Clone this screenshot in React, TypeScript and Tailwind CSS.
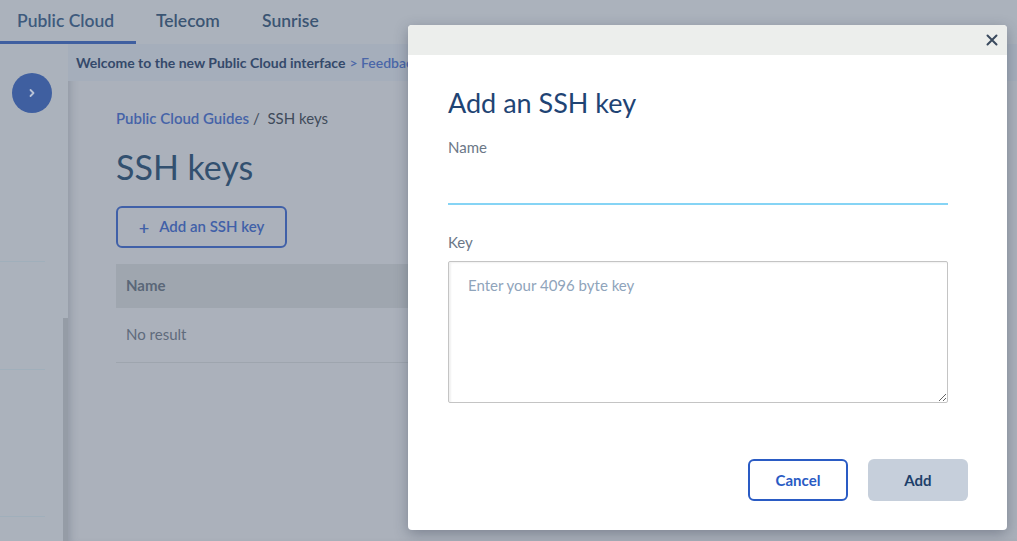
import React from "react";

const FONT = { fontFamily: "Lato, 'Noto Sans', sans-serif" };

function TopNav() {
  return (
    <div className="flex h-[44px] bg-[#abb2bc] text-[17.5px] font-semibold">
      <div className="flex w-[136px] items-center border-b-[3px] border-[#3f5fa0] pl-[17px] pt-[1px] text-[#3e5a7d]">
        Public Cloud
      </div>
      <div className="flex w-[106px] items-center pl-[20px] pb-[2px] text-[#3b5573]">Telecom</div>
      <div className="flex items-center pl-[20px] pb-[2px] text-[#3b5573]">Sunrise</div>
    </div>
  );
}

function Sidebar() {
  return (
    <div className="relative w-[68px] shrink-0 bg-[#abb2bc]">
      <div className="flex flex-col">
        <div className="mt-[29px] ml-[12px] flex h-[40px] w-[40px] items-center justify-center rounded-full bg-[#3f5fa0]">
          <svg width="10" height="10" viewBox="0 0 10 10">
            <path d="M3.5 2 L6.5 5 L3.5 8" fill="none" stroke="#b9c3d6" strokeWidth="1.8" strokeLinecap="round" strokeLinejoin="round" />
          </svg>
        </div>
        <div className="mt-[148px] h-px w-[45px] bg-[#a0afbb]" />
        <div className="mt-[107px] h-px w-[45px] bg-[#a0afbb]" />
        <div className="mt-[146px] h-px w-[45px] bg-[#a0afbb]" />
      </div>
      <div className="absolute right-0 top-[274px] bottom-0 w-[5px] bg-[#959ca6]" />
    </div>
  );
}

function Main() {
  return (
    <div className="flex-1 bg-[#abb1bb] shadow-[inset_8px_0_8px_-6px_rgba(60,70,90,0.25)]">
      <div className="flex h-[37px] items-center bg-[#a5aebb] pl-[8px] text-[14px]">
        <span className="font-bold text-[#34496a]">Welcome to the new Public Cloud interface</span>
        <span className="ml-[4px] font-semibold text-[#4a66a8]">&gt; Feedback</span>
      </div>
      <div className="pl-[48px] pr-[40px]">
        <div className="mt-[26px] flex items-center text-[15px]">
          <span className="font-semibold text-[#4563a8]">Public Cloud Guides</span>
          <span className="ml-[4px] text-[#3f4b5a]">/&nbsp; SSH keys</span>
        </div>
        <h1 className="mt-[15px] text-[34px] leading-[44px] font-normal text-[#32506f]">SSH keys</h1>
        <button className="mt-[17px] flex h-[42px] w-[171px] items-center justify-center gap-[10px] rounded-[6px] border-2 border-[#4060a8] text-[15px] font-semibold text-[#4060a8]">
          <span className="text-[18px] leading-none">+</span>
          <span>Add an SSH key</span>
        </button>
        <div className="mt-[16px]">
          <div className="flex h-[44px] items-center bg-[#9fa6af] pl-[10px] text-[15px] font-bold text-[#5a6778]">Name</div>
          <div className="flex h-[55px] items-center border-b border-[#9ea5ae] pl-[10px] text-[15px] text-[#5f6b7b]">No result</div>
        </div>
      </div>
    </div>
  );
}

function Modal() {
  return (
    <div className="absolute left-[408px] top-[25px] flex h-[505px] w-[599px] flex-col overflow-hidden rounded-[4px] bg-white shadow-[0_4px_14px_rgba(40,50,70,0.35)]">
      <div className="flex h-[30px] items-center justify-end bg-[#eceeec] pr-[8px]">
        <svg width="14" height="14" viewBox="0 0 14 14">
          <path d="M2.5 2.5 L11.5 11.5 M11.5 2.5 L2.5 11.5" stroke="#3a4a5e" strokeWidth="2" strokeLinecap="round" />
        </svg>
      </div>
      <div className="flex flex-1 flex-col pl-[40px] pr-[39px]">
        <h2 className="mt-[30px] text-[27px] leading-[36px] font-normal text-[#1f4474]">Add an SSH key</h2>
        <label className="mt-[16px] text-[15px] leading-[20px] text-[#6b7787]">Name</label>
        <input className="mt-[18px] h-[30px] w-[500px] border-b-2 border-[#86d4f5] outline-none" />
        <label className="mt-[27px] text-[15px] leading-[20px] text-[#6b7787]">Key</label>
        <textarea
          placeholder="Enter your 4096 byte key"
          className="mt-[9px] h-[142px] w-[500px] rounded-[2px] border border-[#c4c4c4] px-[19px] py-[12px] text-[15px] text-[#333] placeholder:text-[#8fa4bb] outline-none shadow-[inset_2px_1px_2px_rgba(0,0,0,0.06)]"
        />
        <div className="mt-[56px] flex justify-end gap-[20px]">
          <button className="flex h-[42px] w-[100px] items-center justify-center rounded-[6px] border-2 border-[#2a5bc4] text-[15px] font-bold text-[#2a5bc4]">Cancel</button>
          <button className="flex h-[42px] w-[100px] items-center justify-center rounded-[6px] bg-[#c6cfdb] text-[15px] font-bold text-[#1d3f6a]">Add</button>
        </div>
      </div>
    </div>
  );
}

export default function App() {
  return (
    <div className="relative h-[541px] w-[1017px] overflow-hidden bg-[#abb2bc]" style={FONT}>
      <TopNav />
      <div className="flex h-[497px]">
        <Sidebar />
        <Main />
      </div>
      <Modal />
    </div>
  );
}
